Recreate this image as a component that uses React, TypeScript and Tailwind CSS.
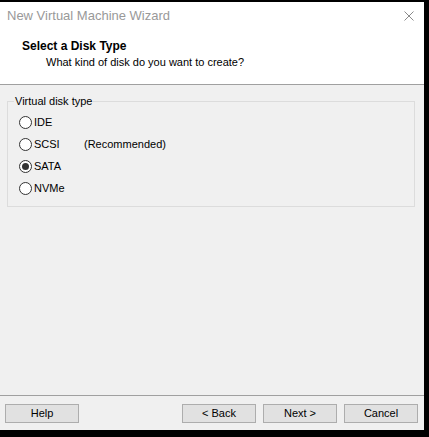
import React from "react";

const font = { fontFamily: '"Liberation Sans", Arial, sans-serif' };

function Radio({ checked }: { checked?: boolean }) {
  return (
    <span className="w-[13px] h-[13px] rounded-full border border-[#333333] bg-white flex items-center justify-center shrink-0">
      {checked && <span className="w-[7px] h-[7px] rounded-full bg-[#333333]" />}
    </span>
  );
}

function Btn({ label }: { label: string }) {
  return (
    <button className="w-[74px] h-[19px] bg-[#e1e1e1] border border-[#adadad] text-[11px] leading-[17px] text-black text-center">
      {label}
    </button>
  );
}

export default function App() {
  const rows: { label: string; note?: string; checked?: boolean }[] = [
    { label: "IDE" },
    { label: "SCSI", note: "(Recommended)" },
    { label: "SATA", checked: true },
    { label: "NVMe" },
  ];
  return (
    <div className="w-[429px] h-[437px] bg-black pt-[2px]" style={font}>
      <div className="w-[424px] h-[428px] bg-white flex flex-col">
        <div className="h-[28px] flex items-center justify-between pl-[7px] pr-[10px]">
          <span className="text-[13px] leading-[16px] text-[#999999]">New Virtual Machine Wizard</span>
          <svg width="10" height="10" viewBox="0 0 10 10">
            <path d="M0.5 0.5 L9.5 9.5 M9.5 0.5 L0.5 9.5" stroke="#8a8a8a" strokeWidth="1" fill="none" />
          </svg>
        </div>
        <div className="h-[55px] border-b border-[#a0a0a0] pt-[8px] pl-[22px]">
          <div className="text-[12px] leading-[16px] font-bold text-black">Select a Disk Type</div>
          <div className="text-[11px] leading-[16px] text-black ml-[24px]">What kind of disk do you want to create?</div>
        </div>
        <div className="flex-1 bg-[#f0f0f0] pt-[9px] px-[7px]">
          <fieldset className="w-[408px] border border-[#dcdcdc] pt-[3px] pb-[7px]">
            <legend className="text-[11px] leading-[14px] text-black ml-[6px] px-[1px]">Virtual disk type</legend>
            <div className="pl-[11px]">
              {rows.map((r) => (
                <div key={r.label} className="h-[22px] flex items-center gap-[2px] text-[11px] text-black">
                  <Radio checked={r.checked} />
                  <span className="w-[48px]">{r.label}</span>
                  {r.note && <span>{r.note}</span>}
                </div>
              ))}
            </div>
          </fieldset>
        </div>
        <div className="h-[35px] bg-[#f0f0f0] border-t border-[#a0a0a0] pt-[8px] pl-[5px] pr-[6px] flex items-start justify-between">
          <Btn label="Help" />
          <div className="flex gap-[7px]">
            <Btn label="< Back" />
            <Btn label="Next >" />
            <Btn label="Cancel" />
          </div>
        </div>
      </div>
    </div>
  );
}
